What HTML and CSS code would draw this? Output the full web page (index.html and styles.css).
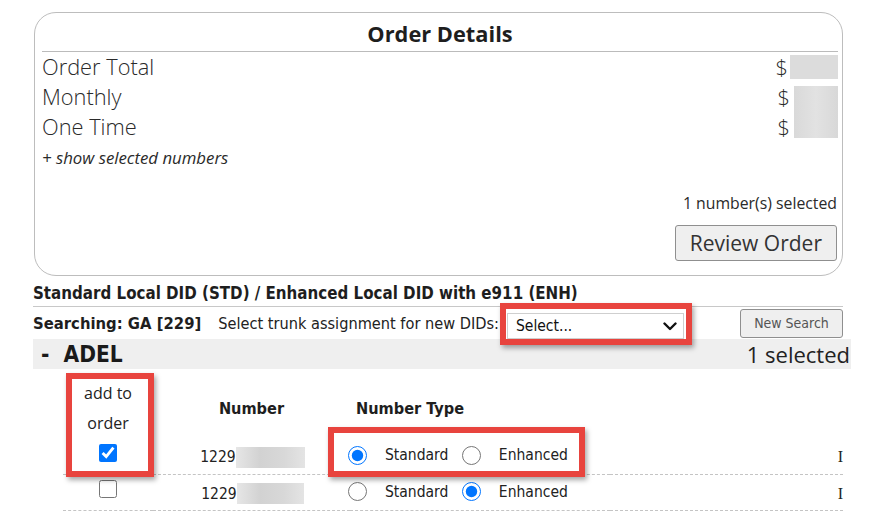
FILE: index.html
```html
<!DOCTYPE html>
<html lang="en">
<head>
<meta charset="utf-8">
<title>Order Details</title>
<link rel="stylesheet" href="styles.css">
</head>
<body>
<div class="page">
  <div class="card">
    <div class="card-title">Order Details</div>
    <div class="sum-row">
      <span>Order Total</span>
      <span class="val"><span class="cur">$</span><span class="redact redact-1"></span></span>
    </div>
    <div class="sum-row">
      <span>Monthly</span>
      <span class="val"><span class="cur">$</span><span class="redact redact-2"></span></span>
    </div>
    <div class="sum-row">
      <span>One Time</span>
      <span class="val"><span class="cur">$</span><span class="redact redact-3"></span></span>
    </div>
    <div class="show-link">+ show selected numbers</div>
    <div class="count">1 number(s) selected</div>
    <div class="review-wrap"><button class="review" type="button">Review Order</button></div>
  </div>

  <div class="section-title">Standard Local DID (STD) / Enhanced Local DID with e911 (ENH)</div>

  <div class="search-row">
    <span class="searching">Searching: GA [229]</span>
    <span class="trunk-label">Select trunk assignment for new DIDs:</span>
    <div class="select">
      <span>Select...</span>
      <svg class="chev" width="14" height="9" viewBox="0 0 14 9"><polyline points="1.5,1.5 7,7 12.5,1.5" fill="none" stroke="#111" stroke-width="2.4" stroke-linecap="round" stroke-linejoin="round"/></svg>
    </div>
    <button class="new-search" type="button">New Search</button>
  </div>

  <div class="city-bar">
    <span class="city">-&nbsp; ADEL</span>
    <span class="sel-count">1 selected</span>
  </div>

  <table class="numbers">
    <thead>
      <tr>
        <th class="c-add">add to<br>order</th>
        <th class="c-num">Number</th>
        <th class="c-type">Number Type</th>
        <th class="c-last"></th>
      </tr>
    </thead>
    <tbody>
      <tr>
        <td class="c-add"><input type="checkbox" checked></td>
        <td class="c-num"><span class="digits">1229</span><span class="blur b1"></span></td>
        <td class="c-type">
          <label class="opt"><input type="radio" name="t1" checked><span>Standard</span></label>
          <label class="opt"><input type="radio" name="t1"><span>Enhanced</span></label>
        </td>
        <td class="c-last">I</td>
      </tr>
      <tr>
        <td class="c-add"><input type="checkbox"></td>
        <td class="c-num"><span class="digits">1229</span><span class="blur b2"></span></td>
        <td class="c-type">
          <label class="opt"><input type="radio" name="t2"><span>Standard</span></label>
          <label class="opt"><input type="radio" name="t2" checked><span>Enhanced</span></label>
        </td>
        <td class="c-last">I</td>
      </tr>
    </tbody>
  </table>

  <div class="hl hl-select"></div>
  <div class="hl hl-add"></div>
  <div class="hl hl-type"></div>
</div>
</body>
</html>
```

FILE: styles.css
```css
* { box-sizing: border-box; }
html, body { margin: 0; padding: 0; background: #ffffff; }
body { font-family: "Open Sans", "Noto Sans", sans-serif; color: #222; }

.page { position: relative; width: 880px; height: 511px; overflow: hidden; padding-top: 12px; }

/* ---- order card ---- */
.card {
  margin-left: 34px;
  width: 809px;
  border: 1px solid #bdbdbd;
  border-radius: 22px;
  padding: 0 4px 0 7px;
}
.card-title {
  padding-top: 4px;
  line-height: 34px;
  text-align: center;
  font-size: 21.8px;
  font-weight: 700;
  color: #1e1e1e;
  border-bottom: 1px solid #bbbbbb;
}
.sum-row {
  display: flex;
  justify-content: space-between;
  height: 30px;
  line-height: 30px;
  font-size: 21.8px;
  font-weight: 300;
  color: #2a2a2a;
}
.val { display: flex; align-items: stretch; }
.cur { line-height: 30px; }
.redact { display: block; background: #dcdcdc; }
.redact-1 { width: 48px; height: 24px; align-self: center; margin-left: 2px; }
.redact-2 { width: 44px; height: 26px; align-self: flex-end; margin-left: 4px;
  background: linear-gradient(90deg, #d9d9d9, #e2e2e2 50%, #d8d8d8); }
.redact-3 { width: 44px; height: 26px; align-self: flex-start; margin-left: 4px;
  background: linear-gradient(90deg, #d9d9d9, #e2e2e2 50%, #d8d8d8); }

.show-link {
  margin-top: 4px;
  line-height: 24px;
  font-size: 16.8px;
  font-style: italic;
  color: #2a2a2a;
}
.count {
  margin-top: 22px;
  line-height: 22px;
  text-align: right;
  font-size: 15.8px;
  color: #2a2a2a;
  padding-right: 1px;
}
.review-wrap { display: flex; justify-content: flex-end; margin-top: 11px; margin-bottom: 14px; }
.review {
  height: 36px;
  padding: 0 14px;
  font-family: "Open Sans", sans-serif;
  font-size: 21px;
  color: #333;
  background: #efefef;
  border: 1px solid #8f8f8f;
  border-radius: 3px;
  margin-right: 1px;
}

/* ---- search section ---- */
.section-title {
  margin: 6px 0 0 33px;
  width: 810px;
  line-height: 22px;
  padding-bottom: 2px;
  border-bottom: 1px solid #c8c8c8;
  font-family: "DejaVu Sans Condensed", "DejaVu Sans", sans-serif;
  font-weight: 700;
  font-size: 16.8px;
  color: #1e1e1e;
}
.search-row {
  margin-left: 33px;
  width: 810px;
  height: 32px;
  display: flex;
  align-items: center;
  font-family: "DejaVu Sans Condensed", "DejaVu Sans", sans-serif;
  color: #1e1e1e;
}
.searching { font-weight: 700; font-size: 16.5px; }
.trunk-label { margin-left: 17px; font-size: 16.2px; color: #222; }
.select {
  align-self: flex-end;
  margin-left: 8px;
  width: 177px;
  height: 26px;
  border: 1px solid #cfcfcf;
  background: #fff;
  display: flex;
  align-items: center;
  justify-content: space-between;
  padding: 0 6px 0 8px;
  font-size: 15.5px;
  color: #111;
}
.chev { display: block; }
.new-search {
  margin-left: auto;
  width: 103px;
  height: 29px;
  padding: 0;
  font-family: "DejaVu Sans Condensed", "DejaVu Sans", sans-serif;
  font-size: 14px;
  color: #555;
  background: #efefef;
  border: 1px solid #8f8f8f;
  border-radius: 3px;
}

.city-bar {
  margin-left: 33px;
  width: 818px;
  height: 30px;
  background: #efefef;
  display: flex;
  justify-content: space-between;
  align-items: center;
}
.city {
  padding-left: 8px;
  font-family: "DejaVu Sans Condensed", "DejaVu Sans", sans-serif;
  font-weight: 700;
  font-size: 22.5px;
  color: #1a1a1a;
}
.sel-count { padding-right: 1px; font-size: 22px; color: #222; }

/* ---- numbers table ---- */
.numbers {
  margin: 9px 0 0 63px;
  width: 780px;
  border-collapse: collapse;
  font-family: "DejaVu Sans Condensed", "DejaVu Sans", sans-serif;
  font-size: 15.5px;
  color: #222;
}
.numbers th { padding: 0; height: 60px; vertical-align: middle; }
.numbers th.c-add {
  font-family: "Open Sans", sans-serif;
  font-weight: 400;
  font-size: 16px;
  line-height: 30px;
  color: #222;
}
.numbers th.c-num, .numbers th.c-type { font-weight: 700; font-size: 16.2px; color: #1e1e1e; }
.numbers th.c-type { text-align: left; padding-left: 6px; }
.numbers td { padding: 3px 0 0; height: 36px; vertical-align: middle; border-bottom: 1px dashed #c4c4c4; }
.numbers td.c-add { padding: 0; }
.c-add { width: 90px; text-align: center; }
.c-num { width: 197px; text-align: center; }
.c-type { width: 260px; text-align: left; white-space: nowrap; }
.c-last { text-align: right; font-family: "Liberation Serif", serif; font-size: 16px; }

.c-add input { width: 18px; height: 18px; margin: 0 0 6px; vertical-align: middle; }
.digits { vertical-align: middle; padding-left: 2px; }
.blur { display: inline-block; vertical-align: middle; height: 21px;
  background: linear-gradient(90deg, #e6e6e6, #d2d2d2 35%, #d8d8d8 70%, #e4e4e4); }
.b1 { width: 69px; }
.b2 { width: 67px; }

.opt { display: inline-flex; align-items: center; margin-right: 9px; }
.opt input { width: 19px; height: 19px; margin: 0 18px 0 -2px; }
.opt + .opt input { margin-left: 0; }

/* ---- annotation highlights ---- */
.hl {
  position: absolute;
  border: 6px solid #e8443e;
  box-shadow: 2px 3px 5px rgba(0, 0, 0, 0.35);
  pointer-events: none;
}
.hl-select { left: 500px; top: 303px; width: 192px; height: 42px; }
.hl-add { left: 66px; top: 373px; width: 88px; height: 104px; }
.hl-type { left: 328px; top: 427px; width: 257px; height: 50px; }
```
